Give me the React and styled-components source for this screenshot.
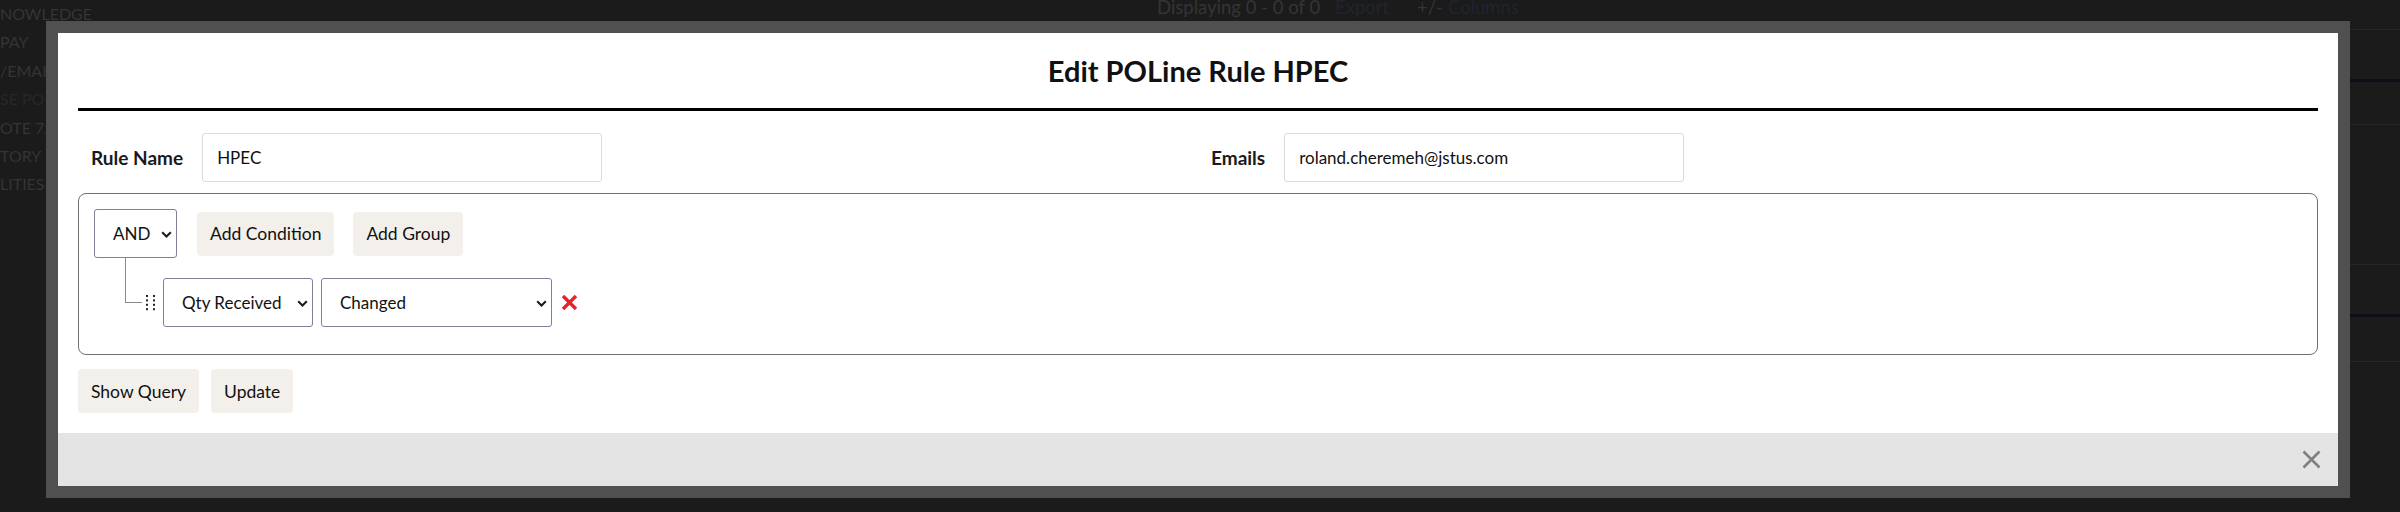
import React from "react";
import styled, { createGlobalStyle } from "styled-components";

const GlobalStyle = createGlobalStyle`
  html, body { margin: 0; padding: 0; background: #1b1b1b; }
  body {
    width: 2400px;
    height: 512px;
    overflow: hidden;
    font-family: Lato, "Noto Sans", sans-serif;
  }
  * { box-sizing: border-box; }
`;

const Page = styled.div`
  position: relative;
  width: 2400px;
  height: 512px;
  background: #1b1b1b;
  overflow: hidden;
  display: flex;
`;

const Nav = styled.ul`
  list-style: none;
  margin: 0;
  padding: 0;
  width: 200px;
  flex: none;
  font-size: 16px;
  line-height: 28.4px;
`;

const NavItem = styled.li`
  color: ${(p) => (p.$dim ? "#272727" : "#343434")};
  white-space: nowrap;
`;

const Main = styled.div`
  flex: 1;
  display: flex;
  flex-direction: column;
`;

const Toolbar = styled.div`
  display: flex;
  align-items: baseline;
  height: 20px;
  margin-top: -3px;
  padding-left: 957px;
  font-size: 18.5px;
  line-height: 20px;
`;

const ToolItem = styled.span`
  flex: none;
  width: ${(p) => (p.$w ? `${p.$w}px` : "auto")};
  color: ${(p) => (p.$link ? "#20252d" : "#353535")};
  white-space: nowrap;
`;

const TableLine = styled.div`
  height: ${(p) => p.$h}px;
  border-bottom: ${(p) => p.$bw || 1}px solid ${(p) => (p.$dark ? "#0c1016" : "#272727")};
  flex: none;
`;

const Dialog = styled.div`
  position: absolute;
  left: 46px;
  top: 21px;
  width: 2304px;
  height: 477px;
  border: 12px solid #505050;
  background: #ffffff;
  display: flex;
  flex-direction: column;
`;

const Content = styled.div`
  flex: 1;
  padding: 0 20px;
`;

const Title = styled.h2`
  margin: 0;
  padding-top: 20px;
  text-align: center;
  font-size: 29px;
  line-height: 36px;
  font-weight: 700;
  color: #111111;
`;

const TitleRule = styled.div`
  height: 3px;
  background: #000000;
  margin-top: 19px;
`;

const FieldsRow = styled.div`
  display: grid;
  grid-template-columns: 1fr 1fr;
  margin-top: 22px;
`;

const Field = styled.div`
  display: flex;
  align-items: center;
  gap: 19px;
  padding-left: 13px;
`;

const Label = styled.label`
  font-size: 19px;
  font-weight: 700;
  color: #1a1a1a;
`;

const TextInput = styled.input`
  width: 400px;
  height: 49px;
  border: 1px solid #dcdcdc;
  border-radius: 3px;
  padding: 0 14px;
  font-family: inherit;
  font-size: 17px;
  color: #111111;
  background: #ffffff;
  outline: none;
`;

const QueryBox = styled.div`
  margin-top: 11px;
  border: 1px solid #707070;
  border-radius: 8px;
  padding: 15px 15px 27px;
`;

const GroupHeader = styled.div`
  display: flex;
  align-items: center;
`;

const SelectWrap = styled.div`
  position: relative;
  flex: none;
  width: ${(p) => p.$w}px;
  height: 49px;
  margin-right: ${(p) => p.$mr || 0}px;
`;

const NativeSelect = styled.select`
  appearance: none;
  -webkit-appearance: none;
  width: 100%;
  height: 100%;
  border: 1px solid #81809b;
  border-radius: 3px;
  background: #ffffff;
  padding: 0 20px 0 18px;
  font-family: inherit;
  font-size: 17px;
  color: #111111;
  outline: none;
`;

const Chevron = styled.svg`
  position: absolute;
  right: 5px;
  top: 22px;
  pointer-events: none;
`;

const ActionButton = styled.button`
  height: 44px;
  padding: 0 13px;
  border: none;
  border-radius: 4px;
  background: #f3f0ec;
  font-family: inherit;
  font-size: 17.5px;
  color: #111111;
  margin-right: ${(p) => p.$mr || 0}px;
`;

const RuleList = styled.div`
  margin-top: 20px;
  padding-left: 52px;
`;

const RuleRow = styled.div`
  position: relative;
  display: flex;
  align-items: center;

  &::before {
    content: "";
    position: absolute;
    left: -21px;
    top: -20px;
    width: 16px;
    height: 44px;
    border-left: 1px solid #8a8a8a;
    border-bottom: 1px solid #8a8a8a;
  }
`;

const DragHandle = styled.svg`
  flex: none;
  margin-right: 8px;
`;

const RemoveIcon = styled.svg`
  flex: none;
  margin-left: 9px;
`;

const ButtonsRow = styled.div`
  display: flex;
  gap: 12px;
  margin-top: 14px;
`;

const Footer = styled.div`
  height: 53px;
  flex: none;
  background: #e4e4e4;
  display: flex;
  align-items: center;
  justify-content: flex-end;
  padding-right: 17px;
`;

const CloseButton = styled.button`
  width: 19px;
  height: 19px;
  padding: 0;
  border: none;
  background: transparent;
  display: flex;
`;

function ChevronIcon() {
  return (
    <Chevron width="11" height="7" viewBox="0 0 11 7">
      <path d="M1.2 1.2 L5.5 5.5 L9.8 1.2" fill="none" stroke="#1a1a1a" strokeWidth="2" />
    </Chevron>
  );
}

function Select({ width, value, options, mr }) {
  return (
    <SelectWrap $w={width} $mr={mr}>
      <NativeSelect defaultValue={value}>
        {options.map((o) => (
          <option key={o}>{o}</option>
        ))}
      </NativeSelect>
      <ChevronIcon />
    </SelectWrap>
  );
}

export default function App() {
  const dots = [];
  [0, 7].forEach((x) =>
    [0, 4.4, 8.8, 13.2].forEach((y) => dots.push(<rect key={`${x}-${y}`} x={x} y={y} width="2" height="2" fill="#222" />))
  );

  return (
    <>
      <GlobalStyle />
      <Page>
        <Nav>
          <NavItem>NOWLEDGE</NavItem>
          <NavItem>PAY</NavItem>
          <NavItem>/EMAIL</NavItem>
          <NavItem $dim>SE PO</NavItem>
          <NavItem>OTE 72</NavItem>
          <NavItem>TORY</NavItem>
          <NavItem>LITIES</NavItem>
        </Nav>
        <Main>
          <Toolbar>
            <ToolItem $w={178}>Displaying 0 - 0 of 0</ToolItem>
            <ToolItem $link $w={82}>Export</ToolItem>
            <ToolItem $w={31}>+/-</ToolItem>
            <ToolItem $link>Columns</ToolItem>
          </Toolbar>
          <TableLine $h={13} />
          <TableLine $h={52} $bw={3} $dark />
          <TableLine $h={43} />
          <TableLine $h={140} />
          <TableLine $h={52} $bw={3} $dark />
          <TableLine $h={45} />
        </Main>

        <Dialog>
          <Content>
            <Title>Edit POLine Rule HPEC</Title>
            <TitleRule />
            <FieldsRow>
              <Field>
                <Label>Rule Name</Label>
                <TextInput readOnly value="HPEC" />
              </Field>
              <Field>
                <Label>Emails</Label>
                <TextInput readOnly value="roland.cheremeh@jstus.com" />
              </Field>
            </FieldsRow>
            <QueryBox>
              <GroupHeader>
                <Select width={83} value="AND" options={["AND", "OR"]} mr={20} />
                <ActionButton $mr={19}>Add Condition</ActionButton>
                <ActionButton>Add Group</ActionButton>
              </GroupHeader>
              <RuleList>
                <RuleRow>
                  <DragHandle width="9" height="16" viewBox="0 0 9 16">
                    {dots}
                  </DragHandle>
                  <Select width={150} value="Qty Received" options={["Qty Received", "Qty Ordered"]} mr={8} />
                  <Select width={231} value="Changed" options={["Changed", "Equals"]} />
                  <RemoveIcon width="17" height="17" viewBox="0 0 17 17">
                    <path d="M2 2 L15 15 M15 2 L2 15" stroke="#e8232a" strokeWidth="3.4" fill="none" />
                  </RemoveIcon>
                </RuleRow>
              </RuleList>
            </QueryBox>
            <ButtonsRow>
              <ActionButton>Show Query</ActionButton>
              <ActionButton>Update</ActionButton>
            </ButtonsRow>
          </Content>
          <Footer>
            <CloseButton aria-label="Close">
              <svg width="19" height="19" viewBox="0 0 19 19">
                <path d="M1.5 1.5 L17.5 17.5 M17.5 1.5 L1.5 17.5" stroke="#808080" strokeWidth="2.6" fill="none" />
              </svg>
            </CloseButton>
          </Footer>
        </Dialog>
      </Page>
    </>
  );
}
